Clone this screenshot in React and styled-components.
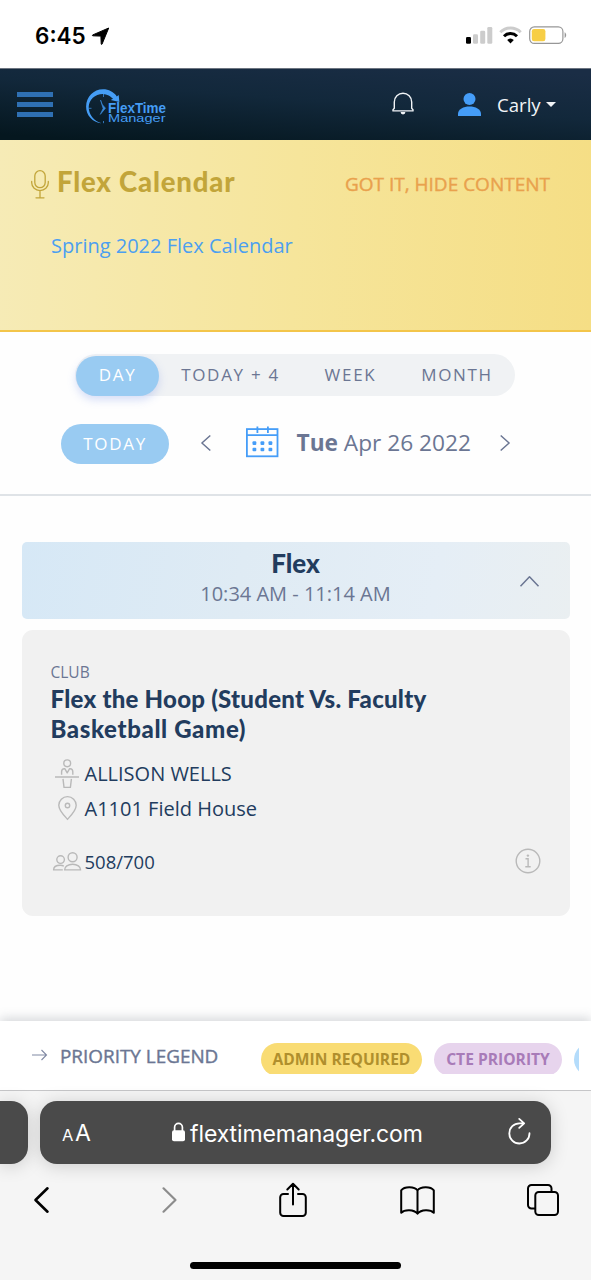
import React from "react";
import styled, { createGlobalStyle, css } from "styled-components";

const Global = createGlobalStyle`
  *, *::before, *::after { box-sizing: border-box; }
  html, body { margin: 0; padding: 0; }
  body { background: #fff; font-family: "Open Sans", "Noto Sans", sans-serif; color: #6b7693; }
  svg { display: block; flex: none; overflow: visible; }
  h1, h2, h3, p { margin: 0; }
`;

const heading = css`
  font-family: "Lato", "Open Sans", sans-serif;
  font-weight: 900;
`;

const Screen = styled.div`
  width: 591px;
  height: 1280px;
  display: flex;
  flex-direction: column;
  overflow: hidden;
  background: #fefefe;
`;

const StatusBar = styled.div`
  height: 68px;
  display: flex;
  align-items: flex-start;
  padding: 20px 24px 0 35px;
  background: #fff;
`;
const Clock = styled.span`
  font: 600 22.5px/31px "Inter", sans-serif;
  color: #000;
  width: 57px;
`;
const LocationSlot = styled.div`
  margin-top: 6.5px;
`;
const StatusIcons = styled.div`
  margin-left: auto;
  display: flex;
  gap: 7px;
  padding-top: 6px;
`;

const Header = styled.header`
  height: 72px;
  display: flex;
  align-items: center;
  padding: 0 35px 0 17px;
  border-top: 1px solid #6c7480;
  background: linear-gradient(184deg, #1a2d45 5%, #12283b 45%, #05171f 95%);
`;
const Burger = styled.div`
  flex: none;
  width: 36px;
  display: flex;
  flex-direction: column;
  gap: 5px;
  margin-right: 33px;
  margin-top: -1px;
  i { height: 5px; background: #2f70b3; }
`;
const LogoSlot = styled.div`
  margin-top: 5px;
`;
const BellSlot = styled.div`
  margin-left: 224.5px;
  margin-top: -1.5px;
`;
const UserMenu = styled.div`
  display: flex;
  align-items: center;
  margin: 0 0 0 44px;
  color: #f1f4f7;
  font-size: 18.6px;
  line-height: 26px;
`;
const UserName = styled.span`
  margin: 0 5px 0 16.5px;
`;

const Banner = styled.section`
  height: 192px;
  border-bottom: 2px solid #f3c54a;
  background: linear-gradient(92deg, #f6ebb6 0%, #f6e59b 50%, #f5de85 100%);
  padding: 25px 41px 0 31px;
`;
const BannerTop = styled.div`
  display: flex;
  height: 36px;
  align-items: flex-start;
`;
const MicSlot = styled.div`
  padding-top: 5px;
`;
const BannerTitle = styled.h1`
  ${heading}
  font-size: 27.5px;
  line-height: 34px;
  color: #c2a53a;
  margin-left: 8px;
  letter-spacing: 0.82px;
`;
const HideLink = styled.span`
  margin-left: auto;
  margin-top: 5px;
  font-size: 19px;
  line-height: 28px;
  color: #e9a14d;
  -webkit-text-stroke: 0.4px #e9a14d;
`;
const BannerLink = styled.p`
  margin: 30px 0 0 20px;
  font-size: 20px;
  line-height: 30px;
  color: #4c9ff0;
`;

const Controls = styled.section`
  height: 164px;
  border-bottom: 2px solid #dfe3e7;
  padding-top: 22px;
`;
const Tabs = styled.div`
  width: 440px;
  height: 42px;
  margin-left: 75px;
  border-radius: 21px;
  background: #f0f2f4;
  display: flex;
  align-items: center;
  padding: 1px 0 0 1px;
`;
const Tab = styled.div`
  width: ${(p) => p.$w}px;
  height: 40px;
  border-radius: 20px;
  font-size: 17px;
  line-height: 38.5px;
  letter-spacing: 1.7px;
  text-align: center;
  white-space: nowrap;
  color: #6b7693;
  ${(p) =>
    p.$active &&
    css`
      background: #99cbf2;
      color: #fff;
      box-shadow: 0 4px 8px rgba(110, 140, 230, 0.28);
    `}
`;
const DateRow = styled.div`
  display: flex;
  align-items: center;
  height: 40px;
  margin-top: 27.5px;
  padding-left: 60.5px;
`;
const TodayButton = styled.div`
  width: 108.5px;
  height: 40px;
  border-radius: 20px;
  background: #99cbf2;
  color: #fff;
  text-align: center;
  font-size: 17px;
  line-height: 39px;
  letter-spacing: 1.7px;
  text-indent: 0.6px;
`;
const ArrowSlot = styled.div`
  margin: ${(p) => p.$mt || 0}px 0 0 ${(p) => p.$ml || 0}px;
`;
const DateText = styled.span`
  margin: 0 0 2px 18px;
  font-size: 22.7px;
  line-height: 32px;
  white-space: nowrap;
  b { font-weight: 700; }
`;

const Main = styled.main`
  flex: 1;
  padding: 45.5px 21.5px 0;
`;
const Period = styled.div`
  height: 77px;
  border-radius: 5px;
  background: linear-gradient(100deg, #d6e8f6 0%, #dfebf4 40%, #e5eef6 75%, #eaeff1 100%);
  display: grid;
  grid-template-columns: 60px 1fr 60px;
  text-align: center;
`;
const PeriodTitle = styled.h2`
  ${heading}
  font-size: 26px;
  line-height: 32px;
  margin-top: 5.5px;
  color: #223c5e;
`;
const PeriodTime = styled.p`
  font-size: 20px;
  line-height: 28px;
  padding-top: 1px;
`;
const PeriodToggle = styled.div`
  padding: 34px 0 0 10px;
`;

const Card = styled.article`
  height: 285.5px;
  margin-top: 11.5px;
  border-radius: 11px;
  background: #f1f1f1;
  padding: 30.5px 29px 0;
  color: #223c5e;
`;
const Category = styled.p`
  font-size: 15.5px;
  line-height: 22px;
  color: #6b7693;
`;
const CardTitle = styled.h3`
  ${heading}
  font-size: 24px;
  line-height: 30px;
  width: 410px;
  margin-top: 1.5px;
  white-space: nowrap;
`;
const Line = styled.span`
  display: block;
  letter-spacing: ${(p) => p.$ls || 0}px;
`;
const Detail = styled.div`
  display: flex;
  align-items: center;
  height: 34.5px;
  margin-top: ${(p) => p.$mt || 0}px;
  font-size: ${(p) => p.$size || 20}px;
`;
const DetailIcon = styled.span`
  width: 34px;
  padding-left: ${(p) => p.$pl || 0}px;
`;
const Info = styled.span`
  margin-left: auto;
`;

const Legend = styled.section`
  height: 70px;
  background: #fff;
  border-bottom: 1px solid #c6c6c8;
  box-shadow: 0 -3px 10px rgba(110, 120, 130, 0.28);
  display: flex;
  padding: 22px 12px 0 32px;
`;
const LegendTitle = styled.span`
  margin-left: 13px;
  width: 201px;
  font-size: 18.9px;
  line-height: 26px;
  white-space: nowrap;
  -webkit-text-stroke: 0.4px #6b7693;
`;
const Badges = styled.div`
  flex: 1;
  height: 31px;
  overflow: hidden;
  display: flex;
  gap: 12px;
`;
const Badge = styled.span`
  flex: none;
  width: ${(p) => p.$w}px;
  height: 33px;
  border-radius: 17px;
  background: ${(p) => p.$bg};
  color: ${(p) => p.$fg};
  font-size: 15.6px;
  font-weight: 700;
  line-height: 32px;
  text-align: center;
`;

const Browser = styled.footer`
  height: 189px;
  background: #f5f5f5;
  display: flex;
  flex-direction: column;
`;
const BarRow = styled.div`
  display: flex;
  gap: 12px;
  margin-top: 10px;
`;
const barBase = css`
  height: 63px;
  background: #4a4a4a;
  box-shadow: 0 2px 18px rgba(0, 0, 0, 0.17);
`;
const PrevTab = styled.div`
  ${barBase}
  width: 28px;
  border-radius: 0 17px 17px 0;
`;
const AddressBar = styled.div`
  ${barBase}
  width: 511px;
  border-radius: 17px;
  display: flex;
  align-items: center;
  padding: 0 20px 0 22px;
  color: #fff;
  font-family: "Inter", sans-serif;
`;
const TextSize = styled.span`
  width: 110px;
  font-size: 23px;
  line-height: 30px;
  padding-top: 3px;
  small { font-size: 16.5px; margin-right: 1.5px; }
`;
const LockSlot = styled.div`
  margin-top: -1px;
`;
const Url = styled.span`
  margin-left: 5px;
  flex: 1;
  font-size: 23px;
  line-height: 30px;
  letter-spacing: -0.1px;
  padding-top: 2px;
`;
const ReloadSlot = styled.div`
  margin-top: -2.5px;
`;
const Toolbar = styled.nav`
  display: flex;
  align-items: center;
  height: 36px;
  margin-top: 18px;
  padding-left: 34px;
`;
const Tool = styled.div`
  margin-left: ${(p) => p.$gap || 0}px;
`;
const HomeIndicator = styled.div`
  width: 211px;
  height: 7.5px;
  border-radius: 4px;
  background: #000;
  margin: 43.5px 0 0 190px;
`;

const LocationIcon = () => (
  <svg width="18" height="18" viewBox="0 0 18 18">
    <path d="M16.700 1 .8 7.900c-.7.300-.5.900.2.900l7.900.3.300 7.700c0 .7.600.9.900.2z" fill="#000" stroke="#000" strokeWidth="1" strokeLinejoin="round" />
  </svg>
);
const SignalIcon = () => (
  <svg width="27" height="18" viewBox="0 0 27 18">
    <rect x="1" y="11" width="5" height="6.7" rx="1.3" fill="#000" />
    <g fill="#ccc">
      <rect x="8" y="8.2" width="5" height="9.5" rx="1.3" />
      <rect x="15.2" y="4.8" width="5" height="12.9" rx="1.3" />
      <rect x="22.3" y="1" width="5" height="16.7" rx="1.3" />
    </g>
  </svg>
);
const WifiIcon = () => (
  <svg width="23" height="18" viewBox="0 0 23 18" fill="none">
    <path d="M1.3 6.2a14.6 14.6 0 0 1 20.4 0" stroke="#ccc" strokeWidth="3" />
    <path d="M5 10.2a9.3 9.3 0 0 1 13 0" stroke="#000" strokeWidth="3" />
    <path d="M8.2 14a4.9 4.9 0 0 1 6.6 0l-3.3 3.5z" fill="#000" />
  </svg>
);
const BatteryIcon = () => (
  <svg width="38" height="18" viewBox="0 0 38 18">
    <rect x=".7" y=".9" width="33.2" height="16.5" rx="4.6" fill="#fff" stroke="#979797" strokeWidth="1.2" />
    <rect x="2.8" y="3" width="13.6" height="12.3" rx="2.2" fill="#f7ce46" />
    <path d="M35.6 6.3c2.1.9 2.1 4.7 0 5.6z" fill="#979797" />
  </svg>
);
const Logo = () => (
  <svg width="81" height="36" viewBox="0 0 81 36">
    <path d="M15.6 34.2C6.5 33.5 0 26 .1 17.4 .2 8 7.6.3 17 .3c5.600 0 11 2.700 13.800 7.100l1.900-1.400.7 7-8.700-2 2.300-1.300C25 7.500 21 5 16.800 4.900 9 4.900 2.800 10.500 2.700 18c0 7.500 5.300 14.200 12.900 16.200z" fill="#459df5" />
    <path d="M14.500 11l1.800 4.500 3.200 3.700-5.200 6.200 2.800-6z" fill="#3a8ada" stroke="#3a8ada" strokeWidth=".6" />
    <path d="M17.500 5v3M3 19.300h2.500M17.500 32v2.200" stroke="#3a8ada" strokeWidth=".8" />
    <g fill="#459df5" fontFamily="Liberation Sans, Arial, sans-serif">
      <text x="22" y="24.200" fontSize="13.800" fontWeight="700" textLength="58" lengthAdjust="spacingAndGlyphs">FlexTime</text>
      <text x="22" y="32.600" fontSize="10.200" textLength="57.500" lengthAdjust="spacingAndGlyphs">Manager</text>
    </g>
  </svg>
);
const BellIcon = () => (
  <svg width="22" height="24" viewBox="0 0 22 24" fill="none" stroke="#f1f4f7" strokeWidth="1.400">
    <path d="M2.300 16.300V10a8.700 8.700 0 0 1 17.400 0v6.300l1.300 1.400v1.200H1v-1.200z" strokeLinejoin="round" />
    <path d="M8.600 20h4.800a2.400 2.400 0 0 1-4.800 0z" fill="#f1f4f7" stroke="none" />
  </svg>
);
const PersonIcon = () => (
  <svg width="23" height="24" viewBox="0 0 23 24" fill="#459df8">
    <circle cx="11.500" cy="6" r="6" />
    <path d="M0 23v-2C0 16.200 5.500 13.600 11.500 13.600S23 16.200 23 21v2z" />
  </svg>
);
const CaretIcon = () => (
  <svg width="10" height="5" viewBox="0 0 10 5"><path d="M0 0h10L5 5z" fill="#f1f4f7" /></svg>
);
const MicIcon = () => (
  <svg width="18" height="29" viewBox="0 0 18 29" fill="none" stroke="#c2a53a" strokeWidth="1.300">
    <rect x="3.800" y=".7" width="10.400" height="17" rx="5.200" />
    <path d="M.7 11.500v1.300a8.300 7.800 0 0 0 16.600 0v-1.300M9 20.500v7.300M5 27.800h8" strokeLinecap="round" />
  </svg>
);
const Chevron = ({ d, w, h, color = "#6b7693", sw = 1.5, cap = "butt" }) => (
  <svg width={w} height={h} viewBox={`0 0 ${w} ${h}`} fill="none" stroke={color} strokeWidth={sw} strokeLinecap={cap} strokeLinejoin="round">
    <path d={d} />
  </svg>
);
const CalendarIcon = () => (
  <svg width="33" height="32" viewBox="0 0 33 32" fill="none" stroke="#459df8" strokeWidth="1.800">
    <rect x=".9" y="3.100" width="30.600" height="27.200" />
    <path d="M1 9.200h31M11.400.5V7M21.900.5V7" />
    <g fill="#459df8" stroke="none">
      {[8.4, 16.4, 24.4].map((x) => [17.1, 23.5].map((y) => <rect key={x + "-" + y} x={x - 1.9} y={y - 1.8} width="3.800" height="3.600" rx="1" />))}
    </g>
  </svg>
);
const gray = { fill: "none", stroke: "#b9b9b9", strokeWidth: 1.4 };
const DeskIcon = () => (
  <svg width="24" height="30" viewBox="0 0 24 30" {...gray}>
    <circle cx="12.200" cy="4.300" r="3.400" />
    <path d="M0 18h24M6.600 15.800V12.800c0-2 1-3.100 2.700-3.100h.5l2.400 4.100 2.400-4.100h.5c1.700 0 2.700 1.100 2.700 3.100v3M8 19.800l1 8.600h6.400l1-8.600" strokeLinejoin="round" />
  </svg>
);
const PinIcon = () => (
  <svg width="19" height="24" viewBox="0 0 19 24" {...gray}>
    <path d="M9.500 23.200C7 20.500.8 14.800.8 9.300a8.700 8.700 0 0 1 17.400 0c0 5.500-6.200 11.200-8.700 13.900z" />
    <circle cx="9.500" cy="9.500" r="2.200" />
  </svg>
);
const PeopleIcon = () => (
  <svg width="28" height="19" viewBox="0 0 28 19" {...gray}>
    <circle cx="19.600" cy="5.300" r="4.500" />
    <path d="M11.600 17.900c0-3.200 3.300-5.700 8-5.700s8 2.500 8 5.700z" strokeLinejoin="round" />
    <circle cx="7.600" cy="7.600" r="3.800" />
    <path d="M9.800 17.900H.6c0-2.900 2.900-4.600 6.700-4.600 1.300 0 2.600.3 3.500.8" strokeLinejoin="round" />
  </svg>
);
const InfoIcon = () => (
  <svg width="26" height="26" viewBox="0 0 26 26" {...gray}>
    <circle cx="13" cy="13" r="11.800" />
    <path d="M10.500 10.700h2.600v7.800M10.300 18.800h5.400" />
    <circle cx="12.900" cy="7.600" r="1.200" fill="#b9b9b9" stroke="none" />
  </svg>
);
const ArrowIcon = () => (
  <svg width="15" height="12" viewBox="0 0 15 12" fill="none" stroke="#8089a3" strokeWidth="1.100">
    <path d="M0 6h14.300M9.500 1l5 5-5 5" />
  </svg>
);
const LockIcon = () => (
  <svg width="13" height="20" viewBox="0 0 13 20">
    <rect x="0" y="8.300" width="13" height="11" rx="2" fill="#fff" />
    <path d="M2.600 9V5.300a3.900 3.900 0 0 1 7.800 0V9" fill="none" stroke="#fff" strokeWidth="1.700" />
  </svg>
);
const ReloadIcon = () => (
  <svg width="23" height="26" viewBox="0 0 23 26" fill="none" stroke="#fff" strokeWidth="1.800" strokeLinecap="round" strokeLinejoin="round">
    <path d="M21.500 15.200A10.100 10.100 0 1 1 11.500 5.300h4.700M11.200.9l5 4.500-5 4.500" />
  </svg>
);
const ShareIcon = () => (
  <svg width="28" height="35" viewBox="0 0 28 35" fill="none" stroke="#000" strokeWidth="2" strokeLinecap="round" strokeLinejoin="round">
    <path d="M9 11H4.500A3.300 3.300 0 0 0 1.200 14.300v15.400a3.300 3.300 0 0 0 3.300 3.300h19a3.300 3.300 0 0 0 3.300-3.300V14.300a3.300 3.300 0 0 0-3.300-3.300H19M14 21.500V1M8.300 6.500 14 .8 19.700 6.500" />
  </svg>
);
const BookIcon = () => (
  <svg width="35" height="29" viewBox="0 0 35 29" fill="none" stroke="#000" strokeWidth="2" strokeLinejoin="round">
    <path d="M17.500 4.500C14.500.4 4.600.2 1.200 4.300v22.400c3.500-3.500 12.600-3.500 16.300 1 3.700-4.500 12.800-4.500 16.300-1V4.300C30.400.2 20.500.4 17.500 4.500zV27.500" />
  </svg>
);
const TabsIcon = () => (
  <svg width="32" height="32" viewBox="0 0 32 32" fill="none" stroke="#000" strokeWidth="2">
    <path d="M8 24.500H4.500A3.500 3.500 0 0 1 1 21V4.500A3.500 3.500 0 0 1 4.500 1H21a3.500 3.500 0 0 1 3.500 3.500V8" />
    <rect x="8.300" y="8" width="22.700" height="23" rx="3.500" />
  </svg>
);

export default function App() {
  return (
    <Screen>
      <Global />
      <StatusBar>
        <Clock>6:45</Clock>
        <LocationSlot><LocationIcon /></LocationSlot>
        <StatusIcons>
          <SignalIcon />
          <WifiIcon />
          <BatteryIcon />
        </StatusIcons>
      </StatusBar>
      <Header>
        <Burger><i /><i /><i /></Burger>
        <LogoSlot><Logo /></LogoSlot>
        <BellSlot><BellIcon /></BellSlot>
        <UserMenu>
          <PersonIcon />
          <UserName>Carly</UserName>
          <CaretIcon />
        </UserMenu>
      </Header>
      <Banner>
        <BannerTop>
          <MicSlot><MicIcon /></MicSlot>
          <BannerTitle>Flex Calendar</BannerTitle>
          <HideLink>GOT IT, HIDE CONTENT</HideLink>
        </BannerTop>
        <BannerLink>Spring 2022 Flex Calendar</BannerLink>
      </Banner>
      <Controls>
        <Tabs>
          <Tab $active $w={83}>DAY</Tab>
          <Tab $w={143}>TODAY + 4</Tab>
          <Tab $w={97}>WEEK</Tab>
          <Tab $w={116}>MONTH</Tab>
        </Tabs>
        <DateRow>
          <TodayButton>TODAY</TodayButton>
          <ArrowSlot $mt={-1.5} $ml={32}><Chevron w={10} h={16} d="M9.300.5.900 8l8.400 7.500" /></ArrowSlot>
          <ArrowSlot $mt={-3} $ml={34.5}><CalendarIcon /></ArrowSlot>
          <DateText><b>Tue</b> Apr 26 2022</DateText>
          <ArrowSlot $mt={-1.5} $ml={29}><Chevron w={10} h={16} d="M.7.500 9.100 8 .7 15.500" /></ArrowSlot>
        </DateRow>
      </Controls>
      <Main>
        <Period>
          <span />
          <div>
            <PeriodTitle>Flex</PeriodTitle>
            <PeriodTime>10:34 AM - 11:14 AM</PeriodTime>
          </div>
          <PeriodToggle><Chevron w={19} h={11} d="M.5 10.300 9.500.8l9 9.500" /></PeriodToggle>
        </Period>
        <Card>
          <Category>CLUB</Category>
          <CardTitle>
            <Line $ls={0.25}>Flex the Hoop (Student Vs. Faculty</Line>
            <Line $ls={0.62}>Basketball Game)</Line>
          </CardTitle>
          <Detail $mt={12.5}><DetailIcon $pl={4.5}><DeskIcon /></DetailIcon>ALLISON WELLS</Detail>
          <Detail><DetailIcon $pl={7}><PinIcon /></DetailIcon>A1101 Field House</Detail>
          <Detail $mt={18.5} $size={18.5}><DetailIcon $pl={2}><PeopleIcon /></DetailIcon>508/700<Info><InfoIcon /></Info></Detail>
        </Card>
      </Main>
      <Legend>
        <ArrowSlot $mt={6}><ArrowIcon /></ArrowSlot>
        <LegendTitle>PRIORITY LEGEND</LegendTitle>
        <Badges>
          <Badge $w={161} $bg="#f9dc74" $fg="#b08f2d">ADMIN REQUIRED</Badge>
          <Badge $w={128} $bg="#e7d4ed" $fg="#a87bb8">CTE PRIORITY</Badge>
          <Badge $w={100} $bg="#b4dcfb" />
        </Badges>
      </Legend>
      <Browser>
        <BarRow>
          <PrevTab />
          <AddressBar>
            <TextSize><small>A</small>A</TextSize>
            <LockSlot><LockIcon /></LockSlot>
            <Url>flextimemanager.com</Url>
            <ReloadSlot><ReloadIcon /></ReloadSlot>
          </AddressBar>
        </BarRow>
        <Toolbar>
          <Tool><Chevron w={15} h={26} sw={2.6} cap="round" color="#000" d="M13.500 1.300 1.500 13l12 11.700" /></Tool>
          <Tool $gap={113}><Chevron w={15} h={26} sw={2.2} cap="round" color="#8c8c8c" d="M1.500 1.300 13.500 13l-12 11.700" /></Tool>
          <Tool $gap={101.5}><ShareIcon /></Tool>
          <Tool $gap={93}><BookIcon /></Tool>
          <Tool $gap={92}><TabsIcon /></Tool>
        </Toolbar>
        <HomeIndicator />
      </Browser>
    </Screen>
  );
}
